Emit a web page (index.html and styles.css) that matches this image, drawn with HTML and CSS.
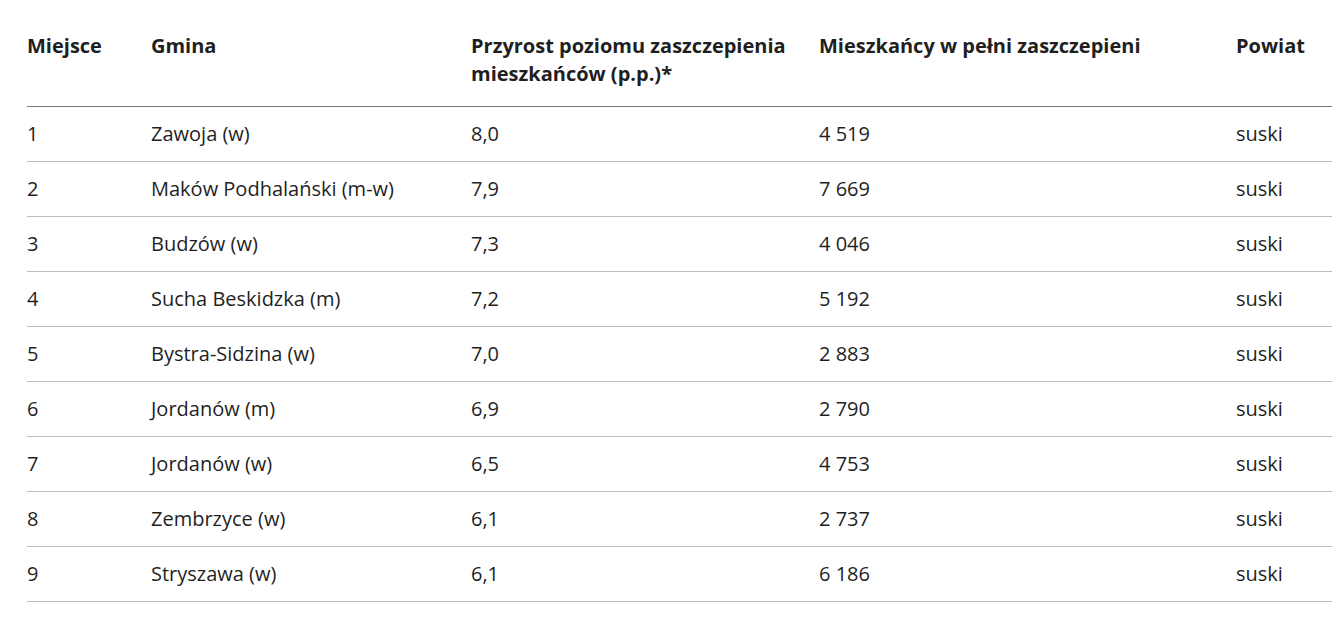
FILE: index.html
```html
<!DOCTYPE html>
<html lang="pl">
<head>
<meta charset="utf-8">
<title>Ranking gmin</title>
<link rel="stylesheet" href="styles.css">
</head>
<body>
<div class="wrap">
<table class="ranking">
<colgroup>
<col class="c1"><col class="c2"><col class="c3"><col class="c4"><col class="c5">
</colgroup>
<thead>
<tr>
<th>Miejsce</th>
<th>Gmina</th>
<th>Przyrost poziomu zaszczepienia mieszkańców (p.p.)*</th>
<th>Mieszkańcy w pełni zaszczepieni</th>
<th>Powiat</th>
</tr>
</thead>
<tbody>
<tr><td>1</td><td>Zawoja (w)</td><td>8,0</td><td>4 519</td><td>suski</td></tr>
<tr><td>2</td><td>Maków Podhalański (m-w)</td><td>7,9</td><td>7 669</td><td>suski</td></tr>
<tr><td>3</td><td>Budzów (w)</td><td>7,3</td><td>4 046</td><td>suski</td></tr>
<tr><td>4</td><td>Sucha Beskidzka (m)</td><td>7,2</td><td>5 192</td><td>suski</td></tr>
<tr><td>5</td><td>Bystra-Sidzina (w)</td><td>7,0</td><td>2 883</td><td>suski</td></tr>
<tr><td>6</td><td>Jordanów (m)</td><td>6,9</td><td>2 790</td><td>suski</td></tr>
<tr><td>7</td><td>Jordanów (w)</td><td>6,5</td><td>4 753</td><td>suski</td></tr>
<tr><td>8</td><td>Zembrzyce (w)</td><td>6,1</td><td>2 737</td><td>suski</td></tr>
<tr><td>9</td><td>Stryszawa (w)</td><td>6,1</td><td>6 186</td><td>suski</td></tr>
</tbody>
</table>
</div>
</body>
</html>
```

FILE: styles.css
```css
html, body {
  margin: 0;
  padding: 0;
  background: #ffffff;
  overflow: hidden;
}
body {
  font-family: "Open Sans", "Noto Sans", sans-serif;
  font-size: 20px;
  line-height: 28px;
  color: #1f1f1f;
}
.wrap {
  padding: 14px 0 0 27px;
}
.ranking {
  width: 1305px;
  border-collapse: collapse;
  table-layout: fixed;
}
.c1 { width: 124px; }
.c2 { width: 320px; }
.c3 { width: 348px; }
.c4 { width: 417px; }
.c5 { width: 96px; }
.ranking th {
  text-align: left;
  vertical-align: top;
  font-weight: 700;
  padding: 18px 0;
  border-bottom: 1px solid #777777;
}
.ranking td {
  padding: 13px 0;
  border-bottom: 1px solid #bdbdbd;
  vertical-align: top;
}
.ranking td:first-child,
.ranking th:first-child {
  padding-left: 0;
}
```
